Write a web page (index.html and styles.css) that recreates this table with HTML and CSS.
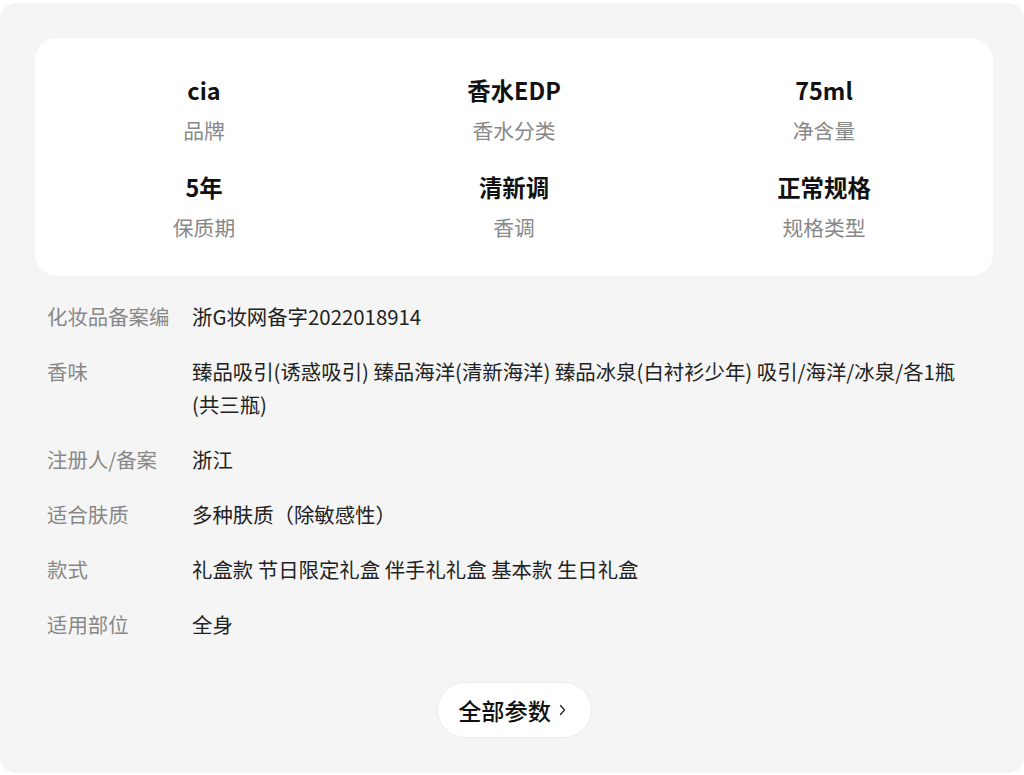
FILE: index.html
```html
<!DOCTYPE html>
<html lang="zh-CN">
<head>
<meta charset="utf-8">
<link rel="stylesheet" href="styles.css">
</head>
<body>
<div class="panel">
  <div class="summary">
    <div class="item"><div class="val">cia</div><div class="lab">品牌</div></div>
    <div class="item"><div class="val">香水EDP</div><div class="lab">香水分类</div></div>
    <div class="item"><div class="val">75ml</div><div class="lab">净含量</div></div>
    <div class="item"><div class="val">5年</div><div class="lab">保质期</div></div>
    <div class="item"><div class="val">清新调</div><div class="lab">香调</div></div>
    <div class="item"><div class="val">正常规格</div><div class="lab">规格类型</div></div>
  </div>
  <div class="params">
    <div class="row"><div class="k">化妆品备案编</div><div class="v">浙G妆网备字2022018914</div></div>
    <div class="row"><div class="k">香味</div><div class="v">臻品吸引(诱惑吸引) 臻品海洋(清新海洋) 臻品冰泉(白衬衫少年) 吸引/海洋/冰泉/各1瓶(共三瓶)</div></div>
    <div class="row"><div class="k">注册人/备案</div><div class="v">浙江</div></div>
    <div class="row"><div class="k">适合肤质</div><div class="v">多种肤质（除敏感性）</div></div>
    <div class="row"><div class="k">款式</div><div class="v">礼盒款 节日限定礼盒 伴手礼礼盒 基本款 生日礼盒</div></div>
    <div class="row"><div class="k">适用部位</div><div class="v">全身</div></div>
  </div>
  <div class="more-wrap">
    <button class="more">全部参数<svg class="chev" width="7" height="12" viewBox="0 0 7 12"><path d="M1.5 1.5l4 4.5-4 4.5" fill="none" stroke="#222" stroke-width="1.3" stroke-linecap="round" stroke-linejoin="round"/></svg></button>
  </div>
</div>
</body>
</html>
```
FILE: styles.css
```css
* { box-sizing: border-box; }
html, body { margin: 0; padding: 0; background: #fff; }
body { font-family: "Noto Sans CJK SC", "Noto Sans", sans-serif; }
.panel {
  margin-top: 3px;
  width: 1024px;
  height: 770px;
  background: #f5f5f5;
  border-radius: 16px;
  padding: 35px 31px 35px 35px;
}
.summary {
  background: #fff;
  border-radius: 22px;
  padding: 37px 14px 34px;
  display: grid;
  grid-template-columns: repeat(3, 1fr);
  row-gap: 27px;
}
.item { text-align: center; }
.val { font-size: 23.4px; line-height: 30px; font-weight: 700; color: #111; }
.lab { font-size: 20.8px; line-height: 30px; margin-top: 10px; color: #888; }
.params {
  margin-top: 24px;
  padding: 0 16px 0 12px;
  display: flex;
  flex-direction: column;
  gap: 22px;
}
.row { display: flex; font-size: 20.4px; line-height: 33px; }
.k { width: 145px; flex: none; color: #888; }
.v { flex: 1; color: #222; }
.more-wrap { display: flex; justify-content: center; margin-top: 41px; }
.more {
  width: 155px; height: 56px;
  border-radius: 28px;
  background: #fff;
  border: 1px solid #ececec;
  font-family: inherit;
  font-size: 23.2px;
  font-weight: 500;
  color: #111;
  display: flex; align-items: center; justify-content: center;
  gap: 8px;
  padding: 0 4px 0 0;
}
.chev { display: block; }
```
